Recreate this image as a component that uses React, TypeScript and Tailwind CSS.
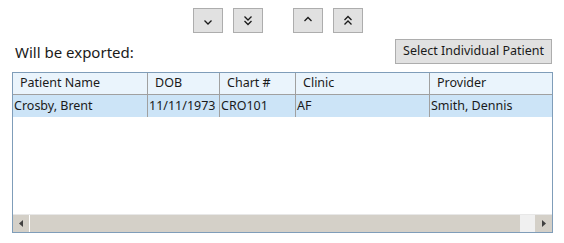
import React from "react";

const COLUMNS = [
  { name: "Patient Name", width: "w-[135px]", value: "Crosby, Brent" },
  { name: "DOB", width: "w-[72px]", value: "11/11/1973" },
  { name: "Chart #", width: "w-[76px]", value: "CRO101" },
  { name: "Clinic", width: "w-[134px]", value: "AF" },
  { name: "Provider", width: "flex-1", value: "Smith, Dennis" },
];

function Chevron({ dir, double }: { dir: "up" | "down"; double?: boolean }) {
  const d = dir === "down" ? "M2.5 1.5 L6 5 L9.5 1.5" : "M2.5 5 L6 1.5 L9.5 5";
  return (
    <svg width="12" height={double ? 11 : 7} viewBox={double ? "0 0 12 11" : "0 0 12 7"} fill="none" stroke="#1a1a1a" strokeWidth="1.3">
      <path d={d} />
      {double && <path d={d} transform="translate(0 4.5)" />}
    </svg>
  );
}

function IconButton({ children }: { children: React.ReactNode }) {
  return (
    <button className="w-[30px] h-[25px] bg-[#e1e1e1] border border-[#adadad] flex items-center justify-center">
      {children}
    </button>
  );
}

export default function App() {
  return (
    <div className="w-[564px] h-[243px] bg-white font-['Noto_Sans',sans-serif] text-[#1a1a1a]">
      {/* move row up / down */}
      <div className="flex pt-[8px] pl-[193px]">
        <div className="flex gap-[10px]">
          <IconButton><div className="mt-[4px]"><Chevron dir="down" /></div></IconButton>
          <IconButton><Chevron dir="down" double /></IconButton>
        </div>
        <div className="flex gap-[10px] ml-[30px]">
          <IconButton><div className="-mt-[3px]"><Chevron dir="up" /></div></IconButton>
          <IconButton><Chevron dir="up" double /></IconButton>
        </div>
      </div>

      <div className="flex items-center justify-between pl-[15px] pr-[12px] mt-[6px]">
        <span className="text-[15px] leading-none mt-[1px]">Will be exported:</span>
        <button className="h-[25px] px-[7px] bg-[#e1e1e1] border border-[#adadad] text-[12.5px] leading-none">
          Select Individual Patient
        </button>
      </div>

      {/* grid */}
      <div className="mt-[8px] ml-[12px] w-[541px] h-[161px] border border-[#7f9db9] flex flex-col">
        <div className="flex h-[22px] bg-[#eaf4fc] border-b border-[#a0a0a0] text-[12.5px]">
          {COLUMNS.map((c, i) => (
            <div key={c.name} className={`${c.width} flex items-center pl-[7px] ${i < COLUMNS.length - 1 ? "border-r border-[#a0a0a0]" : ""}`}>
              {c.name}
            </div>
          ))}
        </div>
        <div className="flex h-[22px] bg-[#cce4f7] text-[12.5px]">
          {COLUMNS.map((c, i) => (
            <div key={c.name} className={`${c.width} flex items-center pl-[1px] whitespace-nowrap overflow-hidden ${i < COLUMNS.length - 1 ? "border-r border-[#a0a0a0]" : ""}`}>
              {c.value}
            </div>
          ))}
        </div>
        <div className="flex-1" />
        {/* horizontal scrollbar */}
        <div className="flex h-[18px] bg-[#f0f0f0] border-t border-[#e8e8e8]">
          <div className="w-[17px] flex items-center justify-center bg-[#d4d0c8] border-r border-white">
            <svg width="4" height="7" viewBox="0 0 4 7"><path d="M4 0 L0 3.5 L4 7 Z" fill="#404040" /></svg>
          </div>
          <div className="w-[490px] bg-[#d4d0c8]" />
          <div className="flex-1" />
          <div className="w-[17px] flex items-center justify-center bg-[#d4d0c8]">
            <svg width="4" height="7" viewBox="0 0 4 7"><path d="M0 0 L4 3.5 L0 7 Z" fill="#404040" /></svg>
          </div>
        </div>
      </div>
    </div>
  );
}
